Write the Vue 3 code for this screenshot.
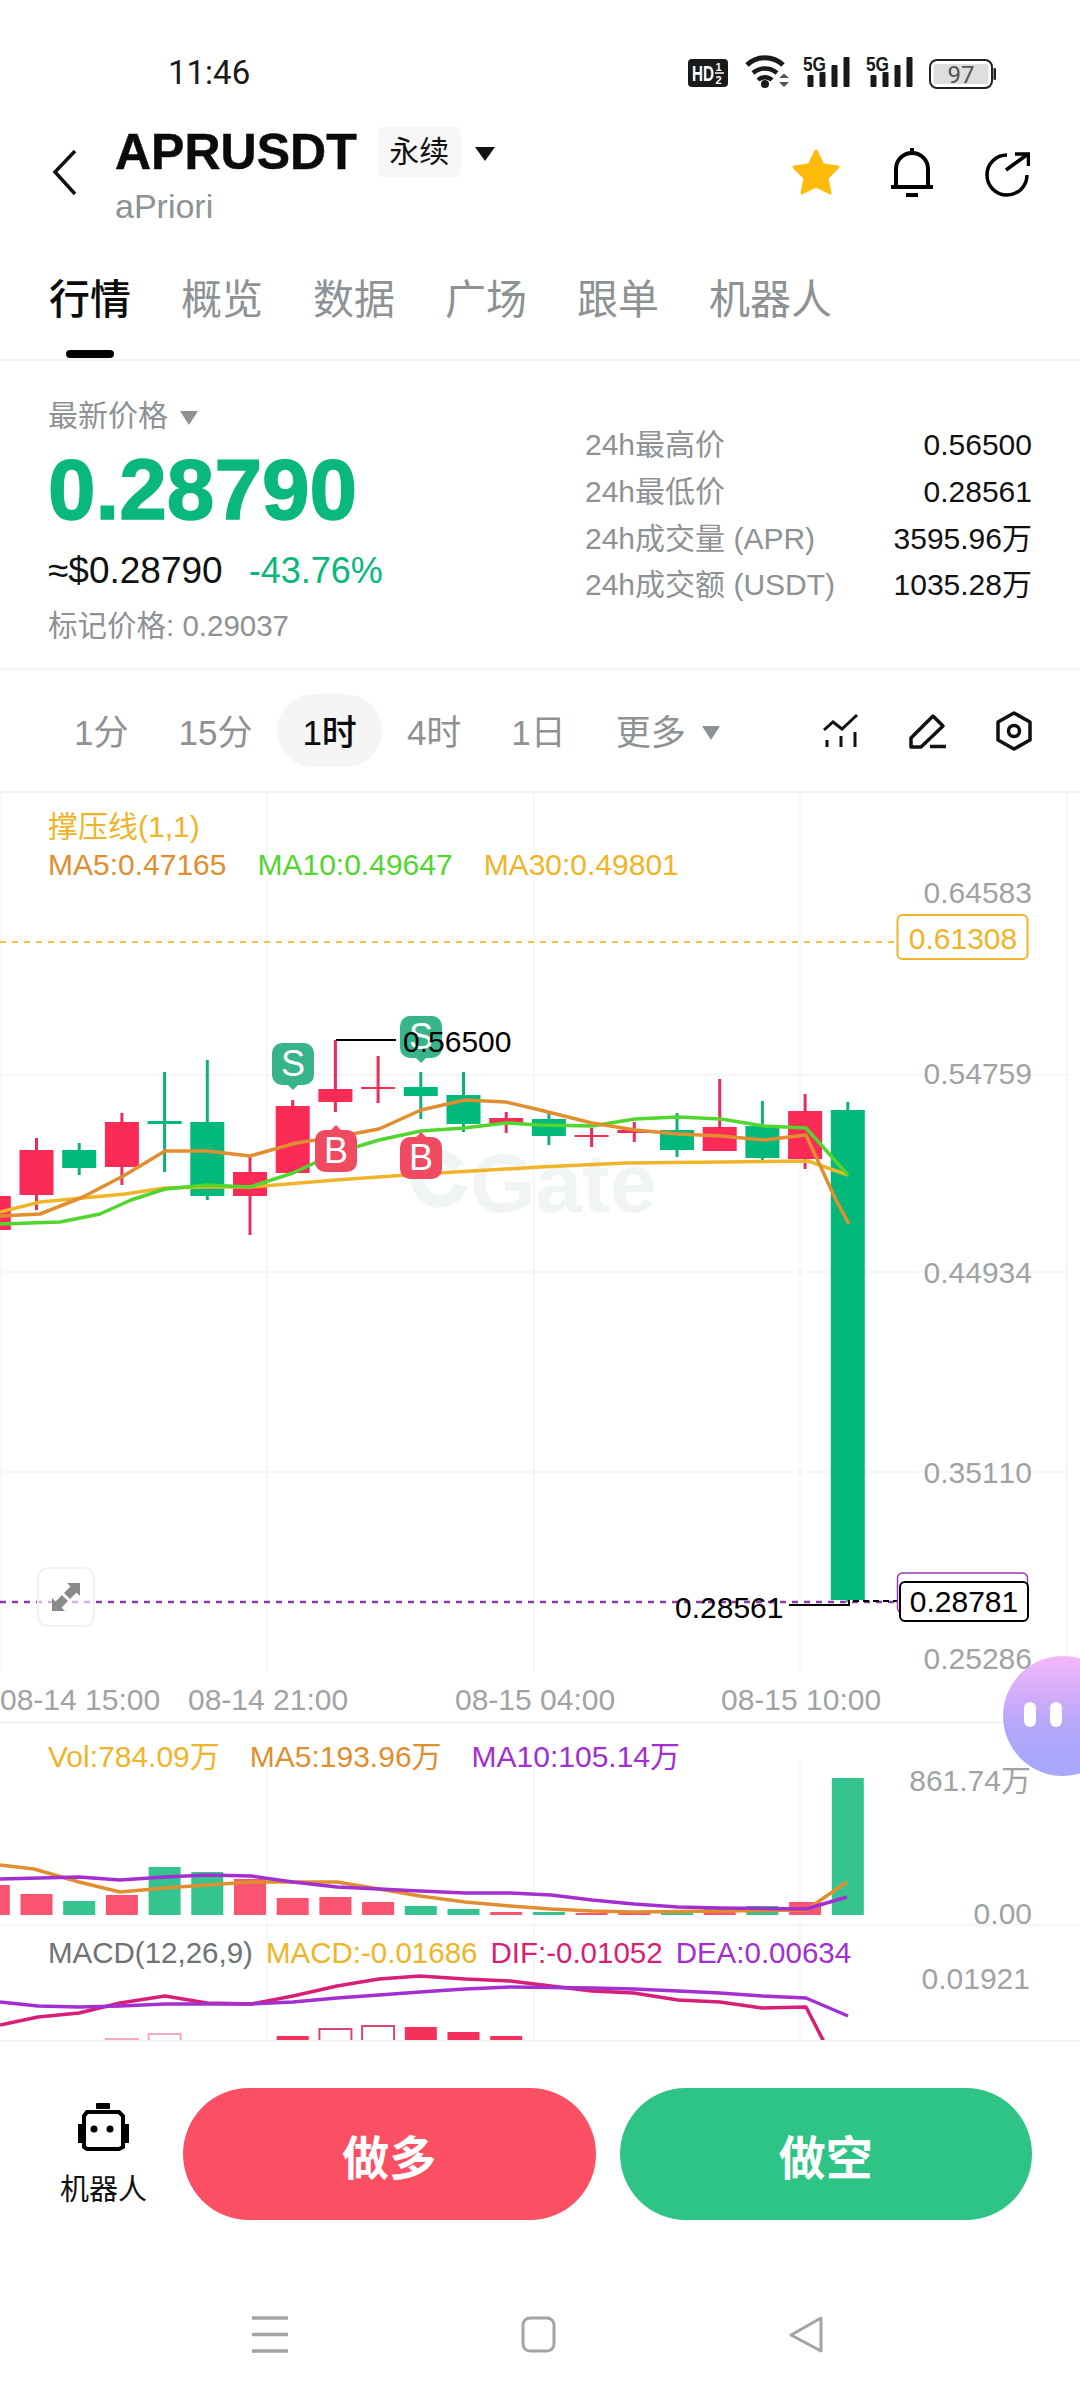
<template>
  <div class="page">
    <!-- status bar -->
    <div class="status">
      <span class="clock">11:46</span>
      <div class="status-icons">
        <svg width="40" height="28" viewBox="0 0 40 28">
          <rect width="40" height="28" rx="4" fill="#1a1a1a" />
          <text x="4" y="22" class="st-hd" textLength="22" lengthAdjust="spacingAndGlyphs">HD</text>
          <text x="27.5" y="12" class="st-frac">1</text>
          <path d="M27 14h9" stroke="#fff" stroke-width="1.5" />
          <text x="27.5" y="25" class="st-frac">2</text>
        </svg>
        <svg class="ic-wifi" width="45" height="34" viewBox="0 0 45 34" fill="none" stroke="#1a1a1a">
          <path d="M2 11A26 26 0 0 1 38 11" stroke-width="5" />
          <path d="M8 19A18 18 0 0 1 32 19" stroke-width="4.5" />
          <path d="M13 26A10 10 0 0 1 27 26" stroke-width="4.5" />
          <circle cx="20" cy="30" r="4" fill="#1a1a1a" stroke="none" />
          <path d="M34 24h10l-5-4.500zM34 28h10l-5 5z" fill="#555" stroke="none" />
        </svg>
        <svg v-for="n in 2" :key="n" class="ic-sig" width="47" height="33" viewBox="0 0 47 33">
          <text x="0" y="16" class="st-5g" textLength="23" lengthAdjust="spacingAndGlyphs">5G</text>
          <rect x="4.500" y="20" width="6" height="12" rx="1" fill="#1a1a1a" />
          <rect x="16.500" y="17" width="6" height="15" rx="1" fill="#1a1a1a" />
          <rect x="28.500" y="10" width="6" height="22" rx="1" fill="#1a1a1a" />
          <rect x="40.500" y="2" width="6" height="30" rx="1" fill="#1a1a1a" />
        </svg>
        <svg width="67" height="30" viewBox="0 0 67 30">
          <rect x="1" y="1" width="62" height="28" rx="7" fill="none" stroke="#222" stroke-width="2" />
          <rect x="4.500" y="5" width="55" height="20" rx="3" fill="#dedede" />
          <text x="32" y="23.500" class="st-batt">97</text>
          <rect x="64.500" y="9" width="2.500" height="12" rx="1" fill="#222" />
        </svg>
      </div>
    </div>

    <!-- symbol header -->
    <div class="header">
      <svg class="back" width="25" height="45" viewBox="0 0 25 45" fill="none" stroke="#111" stroke-width="3.500">
        <path d="M23 1L3 22L23 44" />
      </svg>
      <div class="symbol">
        <div class="symbol-row">
          <span class="symbol-name">APRUSDT</span>
          <span class="tag">永续</span>
          <i class="tri tri-black"></i>
        </div>
        <div class="symbol-sub">aPriori</div>
      </div>
      <div class="header-actions">
        <svg class="ic-star" width="50" height="48" viewBox="0 0 50 48">
          <path d="M25 3L32 17L47 19L36 30L39 45L25 38L11 45L14 30L3 19L18 17Z" fill="#ffba0a" stroke="#ffba0a" stroke-width="3" stroke-linejoin="round" />
        </svg>
        <svg class="ic-bell" width="42" height="51" viewBox="0 0 42 51" fill="none" stroke="#000" stroke-width="4">
          <path d="M5 39V22a16 16 0 0 1 32 0V39" />
          <path d="M0 40H42M21 1V6M15 48H27" />
        </svg>
        <svg class="ic-share" width="45" height="45" viewBox="0 0 45 45" fill="none" stroke="#000" stroke-width="3.500">
          <path d="M22 3A20 20 0 1 0 42 23" />
          <path d="M21 18L43 2M30 2H43.500V14" />
        </svg>
      </div>
    </div>

    <!-- tabs -->
    <div class="tabs">
      <div v-for="(t, i) in tabs" :key="t" class="tab" :class="{ active: i === 0 }">
        <span>{{ t }}</span>
        <i v-if="i === 0" class="tab-bar"></i>
      </div>
    </div>

    <!-- price summary -->
    <div class="summary">
      <div class="summary-left">
        <div class="latest">最新价格<i class="tri tri-gray"></i></div>
        <div class="big-price">0.28790</div>
        <div class="usd-row"><span>≈$0.28790</span><span class="pct">-43.76%</span></div>
        <div class="mark">标记价格: 0.29037</div>
      </div>
      <div class="summary-right">
        <div v-for="s in stats" :key="s[0]" class="stat">
          <span class="stat-label">{{ s[0] }}</span>
          <span class="stat-value">{{ s[1] }}</span>
        </div>
      </div>
    </div>

    <!-- intervals -->
    <div class="intervals">
      <span v-for="v in intervals" :key="v" class="iv" :class="{ on: v === '1时' }">{{ v }}</span>
      <span class="iv more">更多<i class="tri tri-gray"></i></span>
      <div class="iv-icons">
        <svg width="36" height="36" viewBox="0 0 36 36" fill="none" stroke="#111" stroke-width="3">
          <path d="M1 17L10 9L19 16L34 2" />
          <path d="M4 27V34M18 23V34M32 19V34" />
        </svg>
        <svg width="37" height="36" viewBox="0 0 37 36" fill="none" stroke="#111" stroke-width="3.500">
          <path d="M2 25L24 3L34 13L12 34H2Z" stroke-linejoin="round" />
          <path d="M21 33.500H37" />
        </svg>
        <svg width="36" height="40" viewBox="0 0 36 40" fill="none" stroke="#111" stroke-width="3.500">
          <path d="M18 2L34 11V29L18 38L2 29V11Z" stroke-linejoin="round" />
          <circle cx="18" cy="20" r="5.500" />
        </svg>
      </div>
    </div>

    <!-- chart -->
    <div class="chart">
      <div class="pane pane-main">
        <svg class="canvas" width="1080" height="879" viewBox="0 793 1080 879">
          <path v-for="x in gridX" :key="x" :d="`M${x} 793V1672`" class="grid" />
          <path v-for="y in [1075, 1272, 1472]" :key="y" :d="`M0 ${y}H1070`" class="grid" />

          <!-- watermark -->
          <path d="M458 1167A22 22 0 1 0 461 1185" fill="none" stroke="#f1f4f5" stroke-width="13" />
          <text x="470" y="1212" class="watermark">Gate</text>

          <path d="M0 942H897" class="dash-yellow" />
          <path d="M0 1602H897" class="dash-purple" />

          <!-- expand button -->
          <rect x="38" y="1568" width="56" height="58" rx="10" fill="#fff" fill-opacity="0.6" stroke="#f2f2f2" stroke-width="2" />
          <path d="M67 1583H80V1596L76.500 1592.500L70 1599L64 1593L70.500 1586.500ZM52 1598L55.500 1601.500L62 1595L68 1601L61.500 1607.500L65 1611H52Z" fill="#8a8a8a" />

          <!-- candles -->
          <g v-for="c in candles" :key="c.x">
            <path :d="`M${c.x} ${c.hi}V${c.lo}`" :stroke="c.up ? '#e92c5a' : '#0db07c'" stroke-width="3" />
            <rect :x="c.x - 17" :y="c.top" width="34" :height="c.bot - c.top" :fill="c.up ? '#fb2a57' : '#03b87b'" />
          </g>

          <polyline :points="ma30" class="ma" stroke="#f0b429" />
          <polyline :points="ma10" class="ma" stroke="#52d62f" />
          <polyline :points="ma5" class="ma" stroke="#e08e2f" />

          <!-- trade markers -->
          <g v-for="m in markers" :key="m.x + m.y">
            <rect :x="m.x - 21" :y="m.y" width="42" height="42" rx="10" :fill="m.fill" />
            <path :d="m.sell ? `M${m.x - 6} ${m.y + 41}h12l-6 6z` : `M${m.x - 6} ${m.y + 1}h12l-6 -6z`" :fill="m.fill" />
            <text :x="m.x" :y="m.y + 33" class="marker-text">{{ m.t }}</text>
          </g>

          <!-- high / low / last -->
          <path d="M336 1040H396" stroke="#000" stroke-width="2" fill="none" />
          <text x="403" y="1052" class="lbl-black">0.56500</text>
          <path d="M789 1605H849V1600" stroke="#000" stroke-width="2" fill="none" />
          <text x="675" y="1618" class="lbl-black">0.28561</text>
          <path d="M853 1601H900" stroke="#000" stroke-width="2" stroke-dasharray="6 4" fill="none" />

          <text v-for="l in axisMain" :key="l[0]" x="1032" :y="l[1]" class="lbl">{{ l[0] }}</text>

          <rect x="897.500" y="915" width="130" height="44" rx="5" fill="#fff" stroke="#f0b429" stroke-width="2" />
          <text x="963" y="949" class="lbl-yellow">0.61308</text>

          <rect x="897.500" y="1573" width="130" height="40" rx="5" fill="#fff" stroke="#9c3bb0" stroke-width="1.500" />
          <rect x="900" y="1582" width="128" height="39" rx="5" fill="#fff" stroke="#000" stroke-width="2" />
          <text x="964" y="1612" class="lbl-last">0.28781</text>
        </svg>
        <div class="legend-wrap">
          <div class="legend"><span class="c-yellow">撑压线(1,1)</span></div>
          <div class="legend gap-main">
            <span class="c-orange">MA5:0.47165</span>
            <span class="c-green">MA10:0.49647</span>
            <span class="c-yellow">MA30:0.49801</span>
          </div>
        </div>
      </div>

      <div class="pane pane-axis">
        <svg class="canvas" width="1080" height="50" viewBox="0 1672 1080 50">
          <text v-for="t in times" :key="t[0]" :x="t[1]" y="1710" class="lbl-start">{{ t[0] }}</text>
        </svg>
      </div>

      <div class="pane pane-vol">
        <svg class="canvas" width="1080" height="202" viewBox="0 1723 1080 202">
          <path v-for="x in gridX.slice(1, 4)" :key="x" :d="`M${x} 1762V1925`" class="grid" />
          <rect v-for="b in volBars" :key="b.x" :x="b.x - 16" :y="b.top" width="32" :height="1915 - b.top" :fill="b.up ? '#fb5470' : '#35c48f'" />
          <polyline :points="volMa5" class="ma" stroke="#e08e2f" />
          <polyline :points="volMa10" class="ma" stroke="#a32fd1" />
          <text x="1031" y="1791" class="lbl">861.74万</text>
          <text x="1032" y="1924" class="lbl">0.00</text>
        </svg>
        <div class="legend-wrap">
          <div class="legend gap-wide">
            <span class="c-yellow">Vol:784.09万</span>
            <span class="c-orange">MA5:193.96万</span>
            <span class="c-purple">MA10:105.14万</span>
          </div>
        </div>
      </div>

      <div class="pane pane-macd">
        <svg class="canvas" width="1080" height="114" viewBox="0 1926 1080 114">
          <path v-for="x in gridX.slice(1, 4)" :key="x" :d="`M${x} 1926V2040`" class="grid" />
          <rect v-for="b in macdBars" :key="b.x" :x="b.x - 16" :y="b.top" width="32" height="30"
            :fill="b.solid ? '#f5305a' : '#fff'" :stroke="b.solid ? 'none' : b.pale ? '#f7a9bc' : '#d9486f'" stroke-width="2" />
          <polyline :points="dif" class="ma" stroke="#d81f78" />
          <polyline :points="dea" class="ma" stroke="#a32fd1" />
          <text x="1030" y="1989" class="lbl">0.01921</text>
        </svg>
        <div class="legend-wrap legend-macd">
          <div class="legend gap-tight">
            <span class="c-gray">MACD(12,26,9)</span>
            <span class="c-yellow">MACD:-0.01686</span>
            <span class="c-pink">DIF:-0.01052</span>
            <span class="c-purple">DEA:0.00634</span>
          </div>
        </div>
      </div>
    </div>

    <!-- trade actions -->
    <div class="actions">
      <div class="robot">
        <svg width="51" height="48" viewBox="0 0 51 48">
          <rect x="18" y="0" width="14" height="6" rx="1" fill="#000" />
          <path d="M9 9H41L45 13V44L41 46H9L6 44V13Z" fill="none" stroke="#000" stroke-width="4" />
          <rect x="0" y="21" width="4" height="19" fill="#000" />
          <rect x="47" y="21" width="4" height="19" fill="#000" />
          <circle cx="16" cy="26" r="3.500" fill="#000" />
          <circle cx="32" cy="26" r="3.500" fill="#000" />
        </svg>
        <span>机器人</span>
      </div>
      <button class="btn btn-long">做多</button>
      <button class="btn btn-short">做空</button>
    </div>

    <!-- system nav -->
    <div class="nav">
      <svg width="36" height="37" viewBox="0 0 36 37" fill="none" stroke="#a4a4a4" stroke-width="3.500">
        <path d="M0 2H36M0 18.500H36M0 35H36" />
      </svg>
      <svg width="35" height="37" viewBox="0 0 35 37" fill="none" stroke="#a4a4a4" stroke-width="3">
        <rect x="2" y="2" width="31" height="33" rx="7" />
      </svg>
      <svg width="34" height="37" viewBox="0 0 34 37" fill="none" stroke="#a4a4a4" stroke-width="3" stroke-linejoin="round">
        <path d="M32 2V35L2 19Z" />
      </svg>
    </div>

    <!-- floating assistant -->
    <div class="bubble">
      <i></i><i></i>
    </div>
  </div>
</template>

<script setup>
const tabs = ['行情', '概览', '数据', '广场', '跟单', '机器人']
const intervals = ['1分', '15分', '1时', '4时', '1日']
const stats = [
  ['24h最高价', '0.56500'],
  ['24h最低价', '0.28561'],
  ['24h成交量 (APR)', '3595.96万'],
  ['24h成交额 (USDT)', '1035.28万']
]

const gridX = [1, 267, 534, 800, 1067]
const step = 42.7
const xAt = (i) => +(36.5 + step * i).toFixed(1)

// i, high, low, body top, body bottom, up
const candles = [
  [-1, 1190, 1232, 1196, 1230, 1],
  [0, 1138, 1210, 1150, 1195, 1],
  [1, 1143, 1175, 1150, 1168, 0],
  [2, 1113, 1185, 1122, 1167, 1],
  [3, 1072, 1172, 1121, 1124, 0],
  [4, 1060, 1200, 1122, 1196, 0],
  [5, 1155, 1235, 1172, 1196, 1],
  [6, 1100, 1173, 1106, 1173, 1],
  [7, 1040, 1112, 1089, 1102, 1],
  [8, 1056, 1103, 1087, 1089, 1],
  [9, 1072, 1119, 1087, 1096, 0],
  [10, 1072, 1132, 1095, 1124, 0],
  [11, 1112, 1133, 1118, 1124, 1],
  [12, 1114, 1145, 1119, 1136, 0],
  [13, 1128, 1147, 1135, 1137, 1],
  [14, 1122, 1142, 1130, 1133, 1],
  [15, 1113, 1157, 1130, 1150, 0],
  [16, 1079, 1150, 1127, 1151, 1],
  [17, 1101, 1163, 1126, 1158, 0],
  [18, 1094, 1169, 1111, 1159, 1],
  [19, 1102, 1602, 1110, 1600, 0]
].map(([i, hi, lo, top, bot, up]) => ({ x: xAt(i), hi, lo, top, bot, up }))

const ma5 = '0,1216 40,1214 83,1197 125,1175 165,1151 207,1151 250,1156 296,1143 336,1137 379,1129 421,1110 465,1100 506,1102 540,1110 592,1123 635,1130 678,1134 721,1136 764,1140 806,1135 836,1200 849,1224'
const ma10 = '0,1224 60,1222 100,1214 131,1200 165,1189 207,1185 250,1187 293,1173 336,1153 379,1140 421,1131 464,1128 506,1123 540,1125 592,1126 635,1119 678,1117 721,1119 764,1126 806,1128 848,1175'
const ma30 = '0,1212 40,1202 83,1198 125,1194 165,1188 207,1187 250,1187 336,1180 421,1174 540,1167 626,1163 721,1162 808,1161 848,1175'

const markers = [
  { x: 293, y: 1043, t: 'S', sell: true, fill: '#38b48b' },
  { x: 421, y: 1016, t: 'S', sell: true, fill: '#38b48b' },
  { x: 336, y: 1130, t: 'B', sell: false, fill: '#ef4a60' },
  { x: 421, y: 1137, t: 'B', sell: false, fill: '#ef4a60' }
]

const axisMain = [
  ['0.64583', 903],
  ['0.54759', 1084],
  ['0.44934', 1283],
  ['0.35110', 1483],
  ['0.25286', 1669]
]

const times = [
  ['08-14 15:00', 0],
  ['08-14 21:00', 188],
  ['08-15 04:00', 455],
  ['08-15 10:00', 721]
]

// index, top, up
const volBars = [
  [-1, 1885, 1], [0, 1894, 1], [1, 1901, 0], [2, 1895, 1], [3, 1867, 0], [4, 1872, 0], [5, 1879, 1],
  [6, 1898, 1], [7, 1897, 1], [8, 1902, 1], [9, 1906, 0], [10, 1909, 0], [11, 1912, 1], [12, 1912, 0],
  [13, 1913, 1], [14, 1911, 1], [15, 1911, 0], [16, 1909, 1], [17, 1906, 0], [18, 1902, 1], [19, 1778, 0]
].map(([i, top, up]) => ({ x: xAt(i), top, up }))

const volMa5 = '0,1865 34,1869 79,1882 120,1892 165,1888 207,1885 251,1882 337,1882 379,1889 420,1896 465,1902 510,1906 551,1909 592,1911 634,1912 806,1910 847,1882'
const volMa10 = '0,1879 79,1877 120,1880 165,1877 207,1875 251,1876 293,1882 337,1887 379,1889 420,1891 465,1893 510,1893 551,1895 592,1900 634,1904 678,1907 720,1908 806,1909 847,1897'

const macdBars = [
  { x: xAt(2), top: 2039, solid: false, pale: true },
  { x: xAt(3), top: 2034, solid: false, pale: true },
  { x: xAt(6), top: 2036, solid: true },
  { x: xAt(7), top: 2029, solid: false },
  { x: xAt(8), top: 2026, solid: false },
  { x: xAt(9), top: 2027, solid: true },
  { x: xAt(10), top: 2032, solid: true },
  { x: xAt(11), top: 2036, solid: true }
]

const dif = '0,2025 38,2017 79,2013 120,2003 165,1996 207,2003 251,2004 293,1996 337,1986 379,1979 420,1976 465,1979 510,1981 551,1986 592,1991 634,1993 678,2000 720,2002 762,2008 806,2007 824,2042'
const dea = '0,2002 38,2006 79,2007 120,2006 165,2004 251,2004 293,2002 337,1998 379,1995 420,1992 465,1989 510,1987 592,1988 634,1989 678,1991 720,1993 762,1996 806,1998 848,2016'
</script>

<style scoped>
.page {
  position: relative;
  width: 1080px;
  height: 2400px;
  overflow: hidden;
  background: #fff;
  color: #111;
  font-family: "Liberation Sans", "Noto Sans CJK SC", sans-serif;
  display: flex;
  flex-direction: column;
}

/* status bar */
.status {
  height: 120px;
  box-sizing: border-box;
  padding: 50px 84px 0 168px;
  display: flex;
  justify-content: space-between;
  align-items: flex-start;
}

.clock {
  font-family: Roboto, sans-serif;
  font-size: 33px;
  line-height: 46px;
  color: #1a1a1a;
}

.status-icons {
  display: flex;
  align-items: flex-start;
  margin-top: 4px;
  height: 36px;
}

.status-icons svg {
  margin-top: 5px;
  overflow: visible;
}

.ic-wifi {
  margin: 0 13px 0 17px;
}

.status-icons .ic-wifi {
  margin-top: 0;
}

.status-icons .ic-sig {
  margin-top: 1px;
  margin-right: 16px;
}

.st-hd {
  font-size: 22px;
  font-weight: 700;
  fill: #fff;
}

.st-frac {
  font-size: 11px;
  font-weight: 700;
  fill: #fff;
}

.st-5g {
  font-size: 20px;
  font-weight: 700;
  fill: #1a1a1a;
}

.st-batt {
  font-family: Roboto, sans-serif;
  font-size: 24px;
  fill: #555;
  text-anchor: middle;
}

/* header */
.header {
  height: 120px;
  display: flex;
  align-items: flex-start;
  padding-left: 52px;
  padding-right: 50px;
}

.back {
  margin-top: 30px;
  margin-right: 38px;
  flex-shrink: 0;
}

.symbol {
  padding-top: 2px;
}

.symbol-row {
  display: flex;
  align-items: center;
  height: 60px;
}

.symbol-name {
  font-size: 50px;
  font-weight: 700;
  line-height: 60px;
  color: #0b0b0b;
  -webkit-text-stroke: 0.5px #0b0b0b;
}

.tag {
  margin-left: 21px;
  width: 83px;
  height: 50px;
  line-height: 50px;
  text-align: center;
  background: #f7f7f7;
  border-radius: 6px;
  font-size: 30px;
}

.tri {
  display: inline-block;
  width: 0;
  height: 0;
  border-style: solid;
  border-color: transparent;
}

.tri-black {
  margin-left: 14px;
  margin-top: 4px;
  border-width: 14px 10.500px 0;
  border-top-color: #111;
}

.tri-gray {
  margin-left: 12px;
  border-width: 14px 9.500px 0;
  border-top-color: #8e9295;
  vertical-align: middle;
}

.symbol-sub {
  margin-top: 2px;
  font-size: 34px;
  line-height: 44px;
  color: #8e9295;
}

.header-actions {
  margin-left: auto;
  display: flex;
  align-items: flex-start;
}

.ic-star {
  margin-top: 28px;
}

.ic-bell {
  margin-top: 27px;
  margin-left: 50px;
}

.ic-share {
  margin-top: 32px;
  margin-left: 52px;
}

/* tabs */
.tabs {
  height: 121px;
  box-sizing: border-box;
  padding: 30px 0 0 49px;
  display: flex;
  gap: 50px;
  border-bottom: 2px solid #f3f3f3;
}

.tab {
  display: flex;
  flex-direction: column;
  align-items: center;
  font-size: 41px;
  line-height: 60px;
  color: #8e9295;
}

.tab.active {
  color: #0b0b0b;
  font-weight: 500;
}

.tab-bar {
  width: 48px;
  height: 8px;
  margin-top: 20px;
  background: #000;
  border-radius: 4px;
}

/* summary */
.summary {
  height: 310px;
  box-sizing: border-box;
  display: flex;
  justify-content: space-between;
  padding: 35px 48px 0;
  border-bottom: 3px solid #f5f5f5;
}

.latest {
  font-size: 30px;
  line-height: 40px;
  color: #8e9295;
}

.big-price {
  margin-top: 9px;
  font-size: 85.500px;
  line-height: 90px;
  font-weight: 700;
  color: #0ab77c;
  -webkit-text-stroke: 1.5px #0ab77c;
}

.usd-row {
  margin-top: 13px;
  font-size: 37px;
  line-height: 46px;
  color: #111;
}

.pct {
  margin-left: 26px;
  font-size: 36px;
  color: #0ab77c;
}

.mark {
  margin-top: 12px;
  font-size: 29.500px;
  line-height: 40px;
  color: #8e9295;
}

.summary-right {
  width: 447px;
  padding-top: 26px;
}

.stat {
  display: flex;
  justify-content: space-between;
  font-size: 30px;
  line-height: 46.800px;
}

.stat-label {
  color: #8e9295;
}

.stat-value {
  color: #111;
}

/* intervals */
.intervals {
  height: 122px;
  box-sizing: border-box;
  padding: 0 48px 1px 49px;
  display: flex;
  align-items: center;
  border-bottom: 2px solid #f3f3f3;
}

.iv {
  padding: 0 25px;
  height: 73px;
  line-height: 78px;
  font-size: 35px;
  color: #8e9295;
}

.iv.on {
  background: #f5f5f5;
  border-radius: 37px;
  color: #0b0b0b;
  font-weight: 500;
}

.iv.more .tri {
  margin-left: 16px;
  margin-top: -6px;
}

.iv-icons {
  margin-left: auto;
  display: flex;
  align-items: center;
  gap: 50px;
}

/* chart */
.chart {
  height: 1249px;
  display: flex;
  flex-direction: column;
  border-bottom: 2px solid #f3f3f3;
  box-sizing: border-box;
}

.pane {
  position: relative;
  overflow: hidden;
  flex-shrink: 0;
}

.canvas {
  position: absolute;
  left: 0;
  top: 0;
  display: block;
}

.pane-main {
  height: 879px;
}

.pane-axis {
  height: 51px;
  border-bottom: 1px solid #ececec;
  box-sizing: border-box;
}

.pane-vol {
  height: 203px;
  border-bottom: 2px solid #f6f6f6;
  box-sizing: border-box;
  overflow: visible;
}

.pane-vol .canvas {
  overflow: visible;
}

.pane-macd {
  height: 114px;
}

.legend-wrap {
  position: relative;
  padding: 15px 0 0 48px;
}

.legend-macd {
  padding-top: 8px;
}

.legend {
  font-size: 30px;
  line-height: 38px;
  display: flex;
  white-space: nowrap;
}

.gap-main {
  gap: 31px;
}

.gap-wide {
  gap: 30px;
}

.gap-tight {
  gap: 13px;
  font-size: 29.500px;
}

.c-yellow { color: #f0b429; }
.c-orange { color: #e08e2f; }
.c-green { color: #52d62f; }
.c-purple { color: #a32fd1; }
.c-pink { color: #d81f78; }
.c-gray { color: #6f7275; }

.grid {
  stroke: #f5f5f5;
  stroke-width: 1.500;
  fill: none;
}

.watermark {
  font-size: 84px;
  font-weight: 700;
  fill: #f1f4f5;
}

.dash-yellow {
  stroke: #f4c24a;
  stroke-width: 2;
  stroke-dasharray: 6 6;
  fill: none;
}

.dash-purple {
  stroke: #8e3aa8;
  stroke-width: 2.500;
  stroke-dasharray: 6 6;
  fill: none;
}

.ma {
  fill: none;
  stroke-width: 3.500;
  stroke-linejoin: round;
}

.marker-text {
  font-size: 36px;
  fill: #fff;
  text-anchor: middle;
}

.lbl {
  font-size: 30px;
  fill: #9fa3a6;
  text-anchor: end;
  font-kerning: none;
}

.lbl-start {
  font-size: 30px;
  fill: #9fa3a6;
}

.lbl-black {
  font-size: 30px;
  fill: #000;
}

.lbl-yellow {
  font-size: 30px;
  fill: #f0b429;
  text-anchor: middle;
}

.lbl-last {
  font-size: 30px;
  fill: #000;
  text-anchor: middle;
}

/* actions */
.actions {
  height: 258px;
  box-sizing: border-box;
  padding: 46px 48px 0;
  display: flex;
  align-items: flex-start;
  gap: 24px;
}

.robot {
  width: 111px;
  flex-shrink: 0;
  padding-top: 15px;
  display: flex;
  flex-direction: column;
  align-items: center;
  font-size: 29px;
  line-height: 40px;
  color: #111;
}

.robot span {
  margin-top: 19px;
}

.btn {
  flex: 1;
  height: 132px;
  border: 0;
  border-radius: 66px;
  color: #fff;
  font-family: inherit;
  font-size: 47px;
  font-weight: 700;
}

.btn-long {
  background: #fb4f63;
}

.btn-short {
  background: #2dc486;
}

/* system nav */
.nav {
  margin-top: 16px;
  padding-left: 252px;
  display: flex;
  gap: 233px;
}

/* assistant bubble */
.bubble {
  position: absolute;
  left: 1003px;
  top: 1656px;
  width: 120px;
  height: 120px;
  border-radius: 50%;
  background: linear-gradient(180deg, #f6b6fa 0%, #b3a6fb 60%, #a7a8fc 100%);
  display: flex;
  gap: 14px;
  padding: 46px 0 0 21px;
  box-sizing: border-box;
}

.bubble i {
  width: 12px;
  height: 25px;
  border-radius: 6px;
  background: #fff;
}
</style>
